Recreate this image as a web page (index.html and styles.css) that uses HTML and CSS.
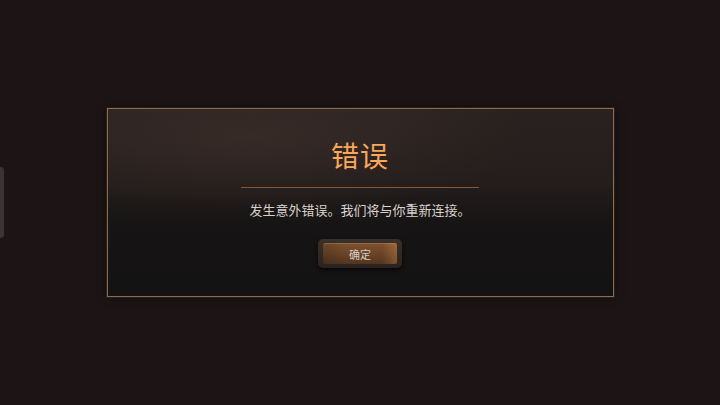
FILE: index.html
```html
<!DOCTYPE html>
<html lang="zh-CN">
<head>
    <meta charset="UTF-8">
    <meta name="viewport" content="width=device-width, initial-scale=1.0">
    <title>错误</title>
    <link rel="stylesheet" href="styles.css">
</head>
<body>

<div class="side-tab"></div>

<div class="dialog">
    <h2 class="dialog-title">错误</h2>
    <div class="divider"></div>
    <p class="dialog-text">发生意外错误。我们将与你重新连接。</p>
    <div class="btn-frame">
        <button type="button" class="ok-btn">确定</button>
    </div>
</div>

</body>
</html>
```

FILE: styles.css
```css
body {
    font-family: "Noto Sans CJK SC", "Noto Sans", sans-serif;
    background-color: #1d1515;
    margin: 0;
    height: 405px;
    display: flex;
    align-items: center;
    justify-content: center;
    position: relative;
    overflow: hidden;
}

.side-tab {
    position: absolute;
    left: -4px;
    top: 167px;
    width: 8px;
    height: 71px;
    border-radius: 4px;
    background-color: #3a3434;
}

.dialog {
    width: 507px;
    height: 189px;
    box-sizing: border-box;
    border: 1.5px solid #8c6c4e;
    background:
        radial-gradient(ellipse 55% 40% at 28% 15%, rgba(78, 58, 50, 0.4), rgba(78, 58, 50, 0) 100%),
        linear-gradient(to bottom, #2a2220 0%, #231d1c 40%, #161414 62%, #131212 100%);
    box-shadow: 0 0 0 1px #2a1e1a, 0 0 8px rgba(0, 0, 0, 0.6);
    display: flex;
    flex-direction: column;
    align-items: center;
    padding-top: 29px;
}

.dialog-title {
    margin: 0;
    font-size: 28px;
    font-weight: 400;
    line-height: 34px;
    color: #f7a85a;
    letter-spacing: 1px;
}

.divider {
    width: 238px;
    height: 1px;
    margin-top: 15px;
    background-color: #86583a;
}

.dialog-text {
    margin: 12px 0 0;
    font-size: 13px;
    line-height: 20px;
    color: #d9d2cc;
}

.btn-frame {
    margin-top: 19px;
    padding: 4px 5px;
    border-radius: 5px;
    background: linear-gradient(to bottom, #3a302a, #2a221e);
    box-shadow: 0 2px 4px rgba(0, 0, 0, 0.7);
}

.ok-btn {
    display: block;
    width: 74px;
    height: 21px;
    font-family: inherit;
    font-size: 11px;
    color: #d6ccc4;
    border: none;
    border-radius: 2px;
    background:
        linear-gradient(to right, rgba(0, 0, 0, 0.15) 0%, rgba(0, 0, 0, 0) 30%, rgba(255, 170, 90, 0) 80%, rgba(255, 170, 90, 0.25) 100%),
        linear-gradient(to bottom, #7e5230 0%, #684226 55%, #523420 100%);
    box-shadow: inset 0 1px 0 rgba(255, 200, 140, 0.2);
    cursor: pointer;
    padding: 0;
}
```
